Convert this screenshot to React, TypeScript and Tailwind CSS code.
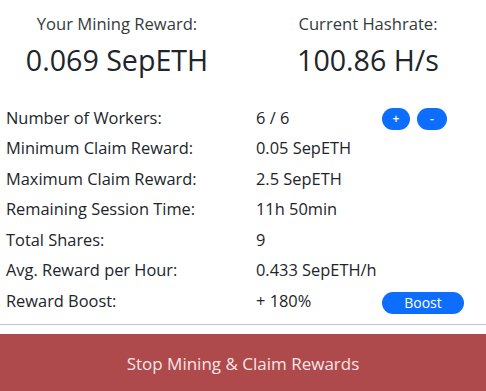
const ROWS = [
  { label: "Number of Workers:", value: "6 / 6", action: "workers" },
  { label: "Minimum Claim Reward:", value: "0.05 SepETH" },
  { label: "Maximum Claim Reward:", value: "2.5 SepETH" },
  { label: "Remaining Session Time:", value: "11h 50min" },
  { label: "Total Shares:", value: "9" },
  { label: "Avg. Reward per Hour:", value: "0.433 SepETH/h" },
  { label: "Reward Boost:", value: "+ 180%", action: "boost" },
];

export default function App() {
  return (
    <div
      className="w-[486px] h-[391px] overflow-hidden bg-white text-[#212529]"
      style={{ fontFamily: '"Open Sans", "Noto Sans", sans-serif' }}
    >
      <div className="flex pt-[12px]">
        <div className="w-[234px] flex flex-col items-center">
          <div className="text-[16.6px] leading-6 text-[#343a40]">Your Mining Reward:</div>
          <div className="text-[28.6px] leading-[48px]">0.069 SepETH</div>
        </div>
        <div className="flex-1 pl-4 flex flex-col items-center">
          <div className="text-[16.6px] leading-6 text-[#343a40]">Current Hashrate:</div>
          <div className="text-[28.6px] leading-[48px]">100.86 H/s</div>
        </div>
      </div>

      <div className="mt-[19px] px-[6px]">
        {ROWS.map((row) => (
          <div key={row.label} className="flex items-center h-[30.5px] text-[16.4px]">
            <div className="w-[250px]">{row.label}</div>
            <div className="w-[126px]">{row.value}</div>
            {row.action === "workers" && (
              <div className="flex gap-[7px] mt-[2px]">
                <button className="w-[28px] h-[22px] rounded-full bg-[#0d6efd] text-white text-[12px] font-semibold leading-none">+</button>
                <button className="w-[30px] h-[22px] rounded-full bg-[#0d6efd] text-white text-[12px] font-semibold leading-none">-</button>
              </div>
            )}
            {row.action === "boost" && (
              <button className="w-[82px] h-[22px] mt-[4px] rounded-full bg-[#0d6efd] text-white text-[14px] leading-none">
                Boost
              </button>
            )}
          </div>
        ))}
      </div>

      <div className="mt-[7px] h-px bg-[#c4c4c4]" />

      <button className="mt-[9px] w-full h-[60px] bg-[#ae4a4b] text-[#f6e6e6] text-[17px]">
        Stop Mining &amp; Claim Rewards
      </button>
    </div>
  );
}
